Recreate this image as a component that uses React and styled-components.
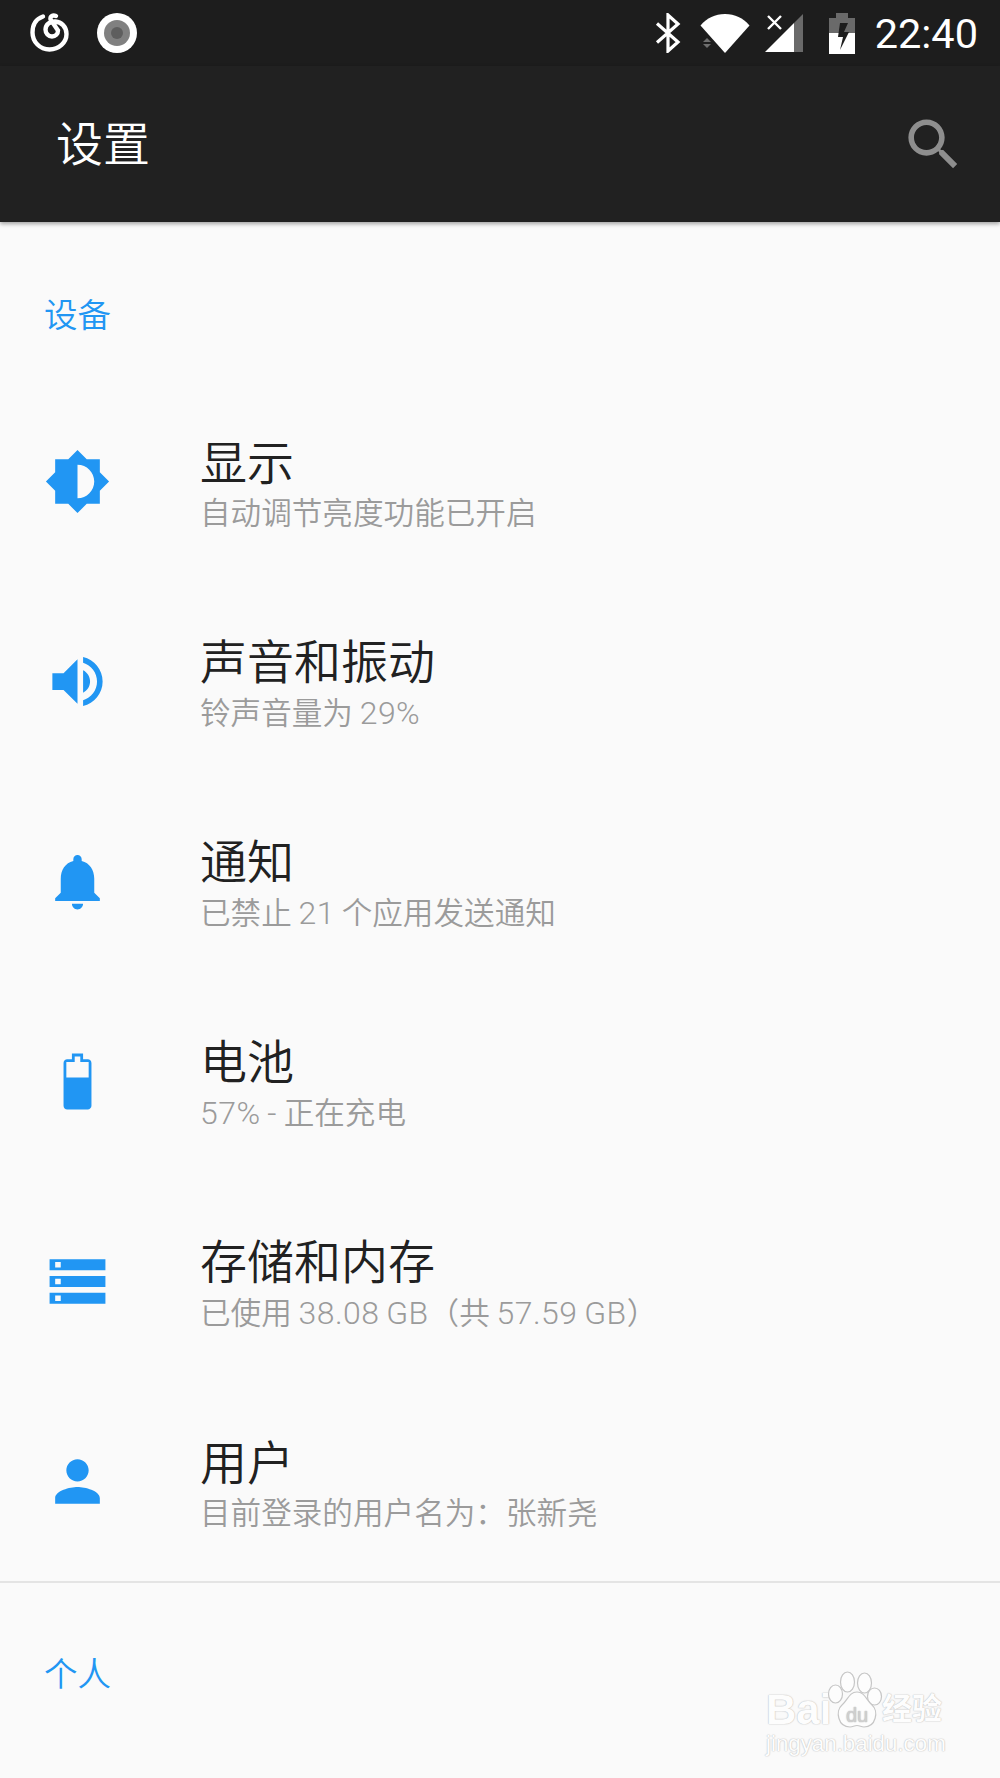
import React from "react";
import styled, { createGlobalStyle } from "styled-components";

const GlobalStyle = createGlobalStyle`
  html, body {
    margin: 0;
    padding: 0;
    background: #fafafa;
  }
  body {
    font-family: Roboto, "Noto Sans CJK SC", sans-serif;
  }
`;

const Page = styled.div`
  position: relative;
  width: 1000px;
  height: 1778px;
  overflow: hidden;
  background: #fafafa;
`;

const StatusBar = styled.div`
  height: 66px;
  background: #1d1d1d;
  display: flex;
  align-items: center;
  justify-content: space-between;
  padding: 0 22px 0 30px;
`;

const StatusGroup = styled.div`
  display: flex;
  align-items: center;
  gap: ${(p) => p.$gap}px;
`;

const Clock = styled.span`
  color: #fff;
  font-size: 41.5px;
  margin-left: 1px;
`;

const SignalSvg = styled.svg`
  margin: 0 6px 0 -5px;
`;

const Toolbar = styled.div`
  position: relative;
  z-index: 1;
  height: 156px;
  background: #212121;
  display: flex;
  align-items: center;
  justify-content: space-between;
  padding: 0 33px 0 56px;
  box-shadow: 0 2px 4px rgba(0, 0, 0, 0.35);
`;

const Title = styled.h1`
  margin: 0;
  color: #fff;
  font-size: 47px;
  font-weight: 350;
  line-height: 1;
`;

const SectionHeader = styled.div`
  height: 159px;
  box-sizing: border-box;
  padding: ${(p) => p.$top}px 0 0 44px;
  color: #2196f3;
  font-size: 33.5px;
  font-weight: 350;
  line-height: 36px;
`;

const Row = styled.div`
  height: 200px;
  display: flex;
  align-items: center;
`;

const IconCell = styled.div`
  width: 200px;
  flex: none;
  padding-left: 44px;
  box-sizing: border-box;
  display: flex;
`;

const BlueIcon = styled.svg`
  width: 67px;
  height: 67px;
  fill: #2196f3;
  fill-rule: evenodd;
`;

const RowText = styled.div`
  display: flex;
  flex-direction: column;
  padding-top: 9px;
`;

const RowTitle = styled.div`
  color: #212121;
  font-size: 47px;
  font-weight: 350;
  line-height: 56px;
`;

const RowSub = styled.div`
  color: #9b9b9b;
  font-size: 30.6px;
  font-weight: 350;
  line-height: 44px;
`;

const Latin = styled.span`
  font-size: 32px;
  font-weight: 300;
  letter-spacing: 0.45px;
  word-spacing: -1.5px;
`;

const Divider = styled.div`
  height: 2px;
  background: #e4e4e4;
`;

const Watermark = styled.div`
  position: absolute;
  left: 766px;
  top: 1670px;
  width: 190px;
  color: #fdfdfd;
  text-shadow: 0 0 1.5px #bdbdbd, 0 0 1px #c8c8c8;
  font-family: "Liberation Sans", "Noto Sans CJK SC", sans-serif;
`;

const MarkTop = styled.div`
  display: flex;
  align-items: flex-end;
  height: 60px;
`;

const MarkBai = styled.span`
  font-size: 42px;
  font-weight: 700;
  line-height: 40px;
  flex: none;
  width: 60px;
`;

const PawSvg = styled.svg`
  flex: none;
  width: 58px;
  height: 60px;
  fill: #fdfdfd;
  stroke: #c6c6c6;
  stroke-width: 1.2;
`;

const MarkJing = styled.span`
  font-size: 30px;
  font-weight: 700;
  line-height: 36px;
  flex: none;
  white-space: nowrap;
  margin-left: -2px;
  margin-bottom: 3px;
`;

const MarkUrl = styled.div`
  font-size: 22.3px;
  line-height: 26px;
  margin-top: 1px;
  white-space: nowrap;
`;

const BLUE_ICONS = {
  brightness:
    "M20 15.31L23.31 12 20 8.69V4h-4.69L12 .69 8.69 4H4v4.69L.69 12 4 15.31V20h4.69L12 23.31 15.31 20H20v-4.69zM12 18V6c3.31 0 6 2.69 6 6s-2.69 6-6 6z",
  volume:
    "M3 9v6h4l5 5V4L7 9H3zM16.5 12c0-1.77-1.02-3.29-2.5-4.03v8.05c1.48-.73 2.5-2.25 2.5-4.02zM14 3.23v2.06c2.89.86 5 3.54 5 6.71s-2.11 5.85-5 6.71v2.06c4.01-.91 7-4.49 7-8.77s-2.99-7.86-7-8.77z",
  bell:
    "M12 22c1.1 0 2-.9 2-2h-4c0 1.1.89 2 2 2zM18 16v-5c0-3.07-1.64-5.64-4.5-6.32V4c0-.83-.67-1.5-1.5-1.5s-1.5.67-1.5 1.5v.68C7.63 5.36 6 7.92 6 11v5l-2 2v1h16v-1l-2-2z",
  battery:
    "M15.67 4H14V2h-4v2H8.33C7.6 4 7 4.6 7 5.33v15.33C7 21.4 7.6 22 8.33 22h7.33c.74 0 1.34-.6 1.34-1.33V5.33C17 4.6 16.4 4 15.67 4zM8 10.6V5h3V3h2v2h3v5.6z",
  storage:
    "M2 20h20v-4H2v4zM4 17h2v2H4v-2zM2 4v4h20V4H2zM6 7H4V5h2v2zM2 14h20v-4H2v4zM4 11h2v2H4v-2z",
  person:
    "M12 12c2.21 0 4-1.79 4-4s-1.79-4-4-4-4 1.79-4 4 1.79 4 4 4zm0 2c-2.67 0-8 1.34-8 4v2h16v-2c0-2.66-5.33-4-8-4z",
};

const ROWS = [
  { icon: "brightness", title: "显示", sub: "自动调节亮度功能已开启" },
  { icon: "volume", title: "声音和振动", sub: "铃声音量为 29%" },
  { icon: "bell", title: "通知", sub: "已禁止 21 个应用发送通知" },
  { icon: "battery", title: "电池", sub: "57% - 正在充电" },
  { icon: "storage", title: "存储和内存", sub: "已使用 38.08 GB（共 57.59 GB）" },
  { icon: "person", title: "用户", sub: "目前登录的用户名为：张新尧" },
];

// latin runs are a bit bigger than the cjk ones in the original
function SubText({ text }) {
  return text
    .split(/([\x20-\x7e]+)/)
    .map((part, i) => (i % 2 ? <Latin key={i}>{part}</Latin> : part));
}

function MusicIcon() {
  return (
    <svg width="40" height="42" viewBox="0 0 40 42" fill="none" stroke="#fff" strokeWidth="4.4" strokeLinecap="round">
      <path d="M13 4.500C6 7 2.500 13 2.500 20.500c0 9.500 7.500 17 17 17s17-7 17-15.500c0-7.500-5.500-12-11-12.500-5.500-.5-10 3-10 8 0 4 3 7 6.500 7 3.500 0 6-2.500 6-6L20.500 7.500c-.5-3 2-5 5.500-3.500" />
    </svg>
  );
}

function RecordIcon() {
  return (
    <svg width="40" height="40" viewBox="0 0 40 40">
      <circle cx="20" cy="20" r="20" fill="#fff" />
      <circle cx="20" cy="20" r="13" fill="#808080" />
      <circle cx="20" cy="20" r="6" fill="#5e5e5e" />
    </svg>
  );
}

function BluetoothIcon() {
  return (
    <svg width="26" height="40" viewBox="0 0 26 40" fill="none" stroke="#fff" strokeWidth="3.2">
      <path d="M2 10.500L23 29 13 38V2l10 9L2 29.500" />
    </svg>
  );
}

function WifiIcon() {
  return (
    <svg width="50" height="40" viewBox="0 0 50 40">
      <path d="M0.500 12.500C7 5 15 1 25 1s18 4 24.500 11.500L25 40z" fill="#fff" />
      <path d="M3 29l4-4 4 4zM3 31h8l-4 4z" fill="#6e6e6e" />
    </svg>
  );
}

function SignalIcon() {
  return (
    <SignalSvg width="40" height="40" viewBox="0 0 40 40">
      <path d="M1 39L30 10v29z" fill="#fff" />
      <path d="M30 10L39 1v38h-9z" fill="#6a6a6a" />
      <path d="M4 3l13 13M17 3L4 16" stroke="#fff" strokeWidth="2.4" />
    </SignalSvg>
  );
}

function StatusBattery() {
  return (
    <svg width="26" height="41" viewBox="0 0 26 41">
      <path d="M0 5h7V0h12v5h7v19H0z" fill="#6a6a6a" />
      <path d="M0 20h26v21H0z" fill="#fff" />
      <path d="M11 10h8l-4 9h5l-9 18 3-13H9z" fill="#1d1d1d" />
    </svg>
  );
}

function SearchIcon() {
  return (
    <svg width="67" height="67" viewBox="0 0 24 24" fill="#8e8e8e">
      <path d="M15.500 14h-.79l-.28-.27C15.410 12.590 16 11.110 16 9.500 16 5.910 13.090 3 9.500 3S3 5.910 3 9.500 5.910 16 9.500 16c1.610 0 3.090-.59 4.230-1.570l.27.28v.79l5 4.990L20.490 19l-4.990-5zm-6 0C7.010 14 5 11.990 5 9.500S7.010 5 9.500 5 14 7.010 14 9.500 11.990 14 9.500 14z" />
    </svg>
  );
}

function PawIcon() {
  return (
    <PawSvg viewBox="0 0 58 60">
      <ellipse cx="9.500" cy="24" rx="7" ry="9" />
      <ellipse cx="21.500" cy="12" rx="7" ry="10" />
      <ellipse cx="38.500" cy="13" rx="7" ry="10" />
      <ellipse cx="48.500" cy="26.500" rx="7" ry="8.500" />
      <path d="M31 22c8 0 9 8 15 13 7 6 4 22-8 22-3 0-4-1.500-7-1.500S27 57 24 57c-12 0-15-16-8-22 6-5 7-13 15-13z" />
      <text x="31" y="52" textAnchor="middle" fontFamily="Liberation Sans" fontSize="20" stroke="none" fill="#cfcfcf">du</text>
    </PawSvg>
  );
}

export default function App() {
  return (
    <Page>
      <GlobalStyle />
      <StatusBar>
        <StatusGroup $gap={27}>
          <MusicIcon />
          <RecordIcon />
        </StatusGroup>
        <StatusGroup $gap={19}>
          <BluetoothIcon />
          <WifiIcon />
          <SignalIcon />
          <StatusBattery />
          <Clock>22:40</Clock>
        </StatusGroup>
      </StatusBar>
      <Toolbar>
        <Title>设置</Title>
        <SearchIcon />
      </Toolbar>
      <SectionHeader $top={76}>设备</SectionHeader>
      {ROWS.map((row) => (
        <Row key={row.icon}>
          <IconCell>
            <BlueIcon viewBox="0 0 24 24">
              <path d={BLUE_ICONS[row.icon]} />
            </BlueIcon>
          </IconCell>
          <RowText>
            <RowTitle>{row.title}</RowTitle>
            <RowSub>
              <SubText text={row.sub} />
            </RowSub>
          </RowText>
        </Row>
      ))}
      <Divider />
      <SectionHeader $top={74}>个人</SectionHeader>
      <Watermark>
        <MarkTop>
          <MarkBai>Bai</MarkBai>
          <PawIcon />
          <MarkJing>经验</MarkJing>
        </MarkTop>
        <MarkUrl>jingyan.baidu.com</MarkUrl>
      </Watermark>
    </Page>
  );
}
